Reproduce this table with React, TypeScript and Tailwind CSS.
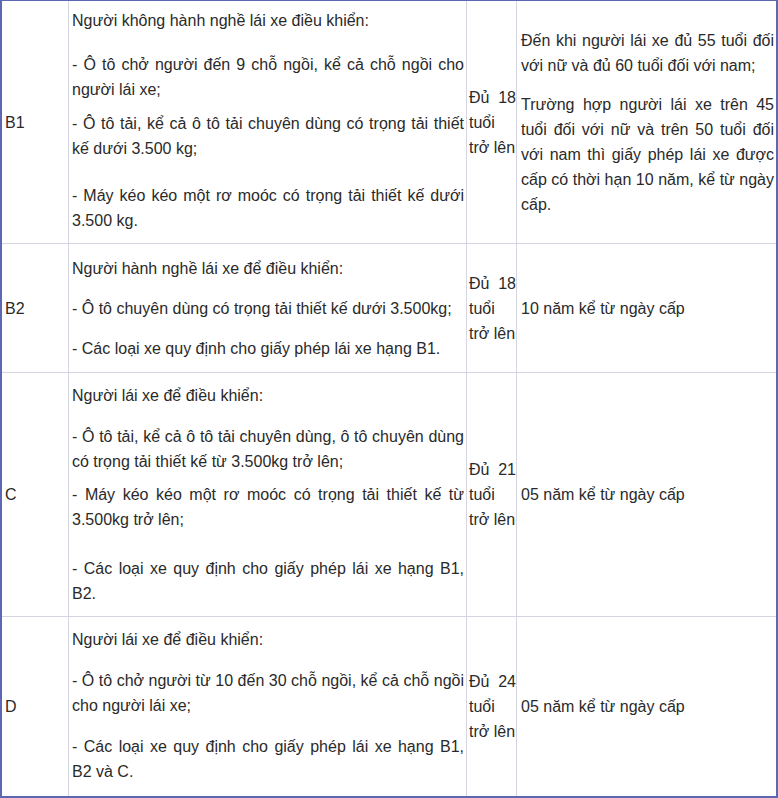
const rows = [
  {
    hang: "B1",
    height: "h-[243px]",
    pt: "pt-[7px]",
    paras: [
      { text: "Người không hành nghề lái xe điều khiển:", mt: "" },
      { text: "- Ô tô chở người đến 9 chỗ ngồi, kể cả chỗ ngồi cho người lái xe;", mt: "mt-[19px]" },
      { text: "- Ô tô tải, kể cả ô tô tải chuyên dùng có trọng tải thiết kế dưới 3.500 kg;", mt: "mt-[9px]" },
      { text: "- Máy kéo kéo một rơ moóc có trọng tải thiết kế dưới 3.500 kg.", mt: "mt-[22px]" },
    ],
    age: "18",
  },
  {
    hang: "B2",
    height: "h-[129px]",
    pt: "pt-[12px]",
    paras: [
      { text: "Người hành nghề lái xe để điều khiển:", mt: "" },
      { text: "- Ô tô chuyên dùng có trọng tải thiết kế dưới 3.500kg;", mt: "mt-[15px]" },
      { text: "- Các loại xe quy định cho giấy phép lái xe hạng B1.", mt: "mt-[15px]" },
    ],
    age: "18",
    term: "10 năm kể từ ngày cấp",
  },
  {
    hang: "C",
    height: "h-[244px]",
    pt: "pt-[10px]",
    paras: [
      { text: "Người lái xe để điều khiển:", mt: "" },
      { text: "- Ô tô tải, kể cả ô tô tải chuyên dùng, ô tô chuyên dùng có trọng tải thiết kế từ 3.500kg trở lên;", mt: "mt-[16px]" },
      { text: "- Máy kéo kéo một rơ moóc có trọng tải thiết kế từ 3.500kg trở lên;", mt: "mt-[8px]" },
      { text: "- Các loại xe quy định cho giấy phép lái xe hạng B1, B2.", mt: "mt-[24px]" },
    ],
    age: "21",
    term: "05 năm kể từ ngày cấp",
  },
  {
    hang: "D",
    height: "h-[179px]",
    pt: "pt-[10px]",
    paras: [
      { text: "Người lái xe để điều khiển:", mt: "" },
      { text: "- Ô tô chở người từ 10 đến 30 chỗ ngồi, kể cả chỗ ngồi cho người lái xe;", mt: "mt-[16px]" },
      { text: "- Các loại xe quy định cho giấy phép lái xe hạng B1, B2 và C.", mt: "mt-[16px]" },
    ],
    age: "24",
    term: "05 năm kể từ ngày cấp",
  },
];

const App = () => {
  return (
    <div className="w-[778px] h-[798px] bg-white border-l-2 border-r-2 border-b-2 border-t border-[#5d67b2] font-['Liberation_Sans',Arial,sans-serif] text-[16px] leading-[25px] text-[#2a2a2a]">
      <div className="grid grid-cols-[67px_398px_50px_259px]">
        {rows.map((row, i) => {
          const last = i === rows.length - 1;
          const cell = last ? "" : "border-b border-[#d6d6e2]";
          return [
            // Hạng
            <div key={row.hang + "-h"} className={`${row.height} ${cell} border-r border-r-[#d6d6e2] flex items-center pl-[3px]`}>
              {row.hang}
            </div>,
            // Đối tượng
            <div key={row.hang + "-d"} className={`${row.height} ${cell} ${row.pt} border-r border-r-[#d6d6e2] pl-[3px] pr-[2px] text-justify`}>
              {row.paras.map((p, j) => (
                <p key={j} className={p.mt}>
                  {p.text}
                </p>
              ))}
            </div>,
            // Tuổi
            <div key={row.hang + "-a"} className={`${row.height} ${cell} border-r border-r-[#d6d6e2] flex items-center pl-[2px]`}>
              <p className="text-justify w-full">
                Đủ {row.age} tuổi <span className="whitespace-nowrap">trở lên</span>
              </p>
            </div>,
            // Thời hạn
            row.term ? (
              <div key={row.hang + "-t"} className={`${row.height} ${cell} flex items-center pl-[4px] pr-[2px]`}>
                {row.term}
              </div>
            ) : (
              <div key={row.hang + "-t"} className={`${row.height} ${cell} pt-[27px] pl-[4px] pr-[2px] text-justify`}>
                <p>Đến khi người lái xe đủ 55 tuổi đối với nữ và đủ 60 tuổi đối với nam;</p>
                <p className="mt-[14px]">
                  Trường hợp người lái xe trên 45 tuổi đối với nữ và trên 50 tuổi đối với nam thì giấy phép lái xe được cấp có thời hạn 10 năm, kể từ ngày cấp.
                </p>
              </div>
            ),
          ];
        })}
      </div>
    </div>
  );
};

export default App;
